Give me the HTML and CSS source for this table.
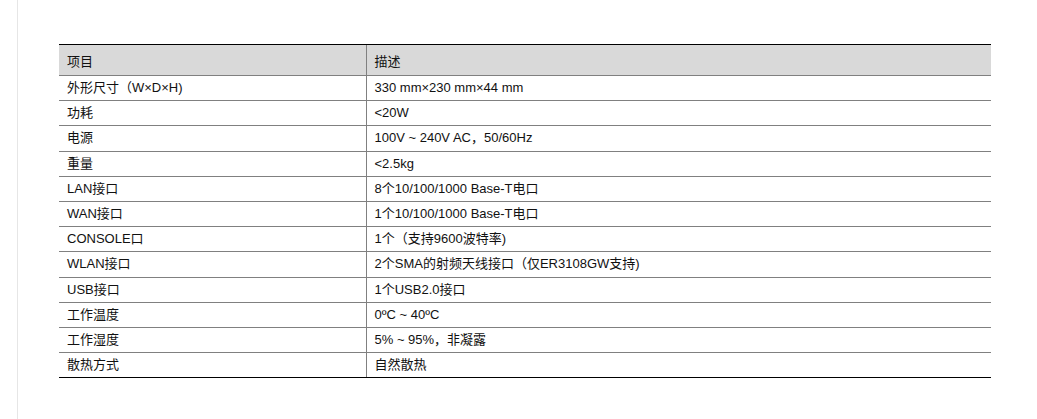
FILE: index.html
```html
<!DOCTYPE html>
<html lang="zh">
<head>
<meta charset="utf-8">
<link rel="stylesheet" href="styles.css">
</head>
<body>
<div class="page">
  <table class="spec">
    <colgroup><col class="c1"><col class="c2"></colgroup>
    <thead>
      <tr><th>项目</th><th>描述</th></tr>
    </thead>
    <tbody>
      <tr><td>外形尺寸（W×D×H)</td><td>330 mm×230 mm×44 mm</td></tr>
      <tr><td>功耗</td><td>&lt;20W</td></tr>
      <tr><td>电源</td><td>100V ~ 240V AC，50/60Hz</td></tr>
      <tr><td>重量</td><td>&lt;2.5kg</td></tr>
      <tr><td>LAN接口</td><td>8个10/100/1000 Base-T电口</td></tr>
      <tr><td>WAN接口</td><td>1个10/100/1000 Base-T电口</td></tr>
      <tr><td>CONSOLE口</td><td>1个（支持9600波特率)</td></tr>
      <tr><td>WLAN接口</td><td>2个SMA的射频天线接口（仅ER3108GW支持)</td></tr>
      <tr><td>USB接口</td><td>1个USB2.0接口</td></tr>
      <tr><td>工作温度</td><td>0ºC ~ 40ºC</td></tr>
      <tr><td>工作湿度</td><td>5% ~ 95%，非凝露</td></tr>
      <tr class="last"><td>散热方式</td><td>自然散热</td></tr>
    </tbody>
  </table>
</div>
</body>
</html>
```
FILE: styles.css
```css
html, body {
  margin: 0;
  padding: 0;
  background: #fff;
}
body {
  font-family: "Liberation Sans", Arial, "Noto Sans CJK SC", sans-serif;
  font-size: 13px;
  color: #111;
}
.page {
  margin-left: 17px;
  border-left: 1px solid #e6e6e6;
  min-height: 419px;
  box-sizing: border-box;
  padding-top: 44px;
  padding-left: 41px;
}
.spec {
  border-collapse: collapse;
  width: 932px;
  border-top: 1px solid #000;
}
.spec .c1 { width: 307px; }
.spec .c2 { width: 625px; }
.spec th {
  background: #d9d9d9;
  font-weight: normal;
  text-align: left;
  height: 31px;
  padding: 3px 8px 0;
  line-height: 16px;
  box-sizing: border-box;
  border-top: 1px solid #000;
  border-bottom: 1px solid #808080;
}
.spec td {
  height: 25.2px;
  padding: 0 8px;
  line-height: 16px;
  box-sizing: border-box;
  border-bottom: 1px solid #808080;
}
.spec .last td {
  border-bottom: 1px solid #000;
}
.spec th + th, .spec td + td {
  border-left: 1px solid #808080;
}
```
